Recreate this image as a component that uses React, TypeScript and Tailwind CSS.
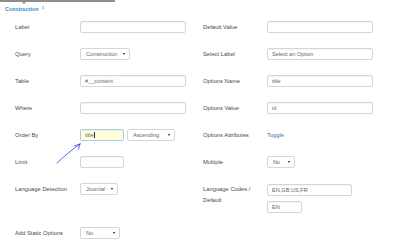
import React from "react";

const font = { fontFamily: '"Liberation Sans", Arial, sans-serif' };

function Field({ value, className = "", focused = false }: { value?: string; className?: string; focused?: boolean }) {
  return (
    <div
      className={`h-[12px] rounded-[2px] border px-[4px] flex items-center text-[5.6px] text-[#666] shadow-[inset_0_1px_1px_rgba(0,0,0,0.05)] ${
        focused ? "border-[#a6cfee] bg-[#ffffdc]" : "border-[#d6d6d6] bg-white"
      } ${className}`}
    >
      {value}
      {focused && <span className="w-[0.6px] h-[6px] bg-[#333] ml-[0.5px]" />}
    </div>
  );
}

function Select({ value, className = "" }: { value: string; className?: string }) {
  return (
    <div
      className={`h-[12px] rounded-[2px] border border-[#d6d6d6] bg-white pl-[5px] pr-[4px] flex items-center justify-between text-[5.6px] text-[#666] ${className}`}
    >
      <span>{value}</span>
      <span className="w-0 h-0 border-l-[1.5px] border-r-[1.5px] border-t-[2.5px] border-l-transparent border-r-transparent border-t-[#111]" />
    </div>
  );
}

function Label({ children, right = false }: { children: React.ReactNode; right?: boolean }) {
  return (
    <div className={`${right ? "w-[64px]" : "w-[80px] pl-[15px]"} shrink-0 text-[5.8px] leading-[12px] text-[#4a4a4a]`}>
      {children}
    </div>
  );
}

export default function App() {
  return (
    <div className="relative w-[406px] h-[250px] bg-white overflow-hidden" style={font}>
      {/* header */}
      <div className="h-[21px]">
        <div className="relative h-[2px] w-[115px] bg-[#8d8d8d]">
          <div className="absolute left-[22px] top-[2px] w-0 h-0 border-l-[2px] border-r-[2px] border-t-[2px] border-l-transparent border-r-transparent border-t-[#8d8d8d]" />
        </div>
        <div className="mt-[3px] ml-[5px] text-[5.4px] leading-[8px] font-bold text-[#2e8dd0]">
          Construction <sup className="text-[4px] ml-[2px]">1</sup>
        </div>
      </div>

      <div className="grid grid-cols-[203px_203px]">
        {/* row 1 */}
        <div className="h-[27px] flex items-start">
          <Label>Label</Label>
          <Field className="w-[106px]" />
        </div>
        <div className="h-[27px] flex items-start">
          <Label right>Default Value</Label>
          <Field className="w-[106px]" />
        </div>

        {/* row 2 */}
        <div className="h-[27px] flex items-start">
          <Label>Query</Label>
          <Select value="Construction" className="w-[50px]" />
        </div>
        <div className="h-[27px] flex items-start">
          <Label right>Select Label</Label>
          <Field value="Select an Option" className="w-[106px]" />
        </div>

        {/* row 3 */}
        <div className="h-[27px] flex items-start">
          <Label>Table</Label>
          <Field value="#__content" className="w-[106px]" />
        </div>
        <div className="h-[27px] flex items-start">
          <Label right>Options Name</Label>
          <Field value="title" className="w-[106px]" />
        </div>

        {/* row 4 */}
        <div className="h-[27px] flex items-start">
          <Label>Where</Label>
          <Field className="w-[106px]" />
        </div>
        <div className="h-[27px] flex items-start">
          <Label right>Options Value</Label>
          <Field value="id" className="w-[106px]" />
        </div>

        {/* row 5 */}
        <div className="h-[27px] flex items-start">
          <Label>Order By</Label>
          <Field value="title" focused className="w-[44px]" />
          <Select value="Ascending" className="w-[48px] ml-[3px]" />
        </div>
        <div className="h-[27px] flex items-start">
          <Label right>Options Attributes</Label>
          <span className="text-[5.8px] leading-[12px] text-[#2a78b8]">Toggle</span>
        </div>

        {/* row 6 */}
        <div className="h-[27px] flex items-start">
          <Label>Limit</Label>
          <Field className="w-[44px]" />
        </div>
        <div className="h-[27px] flex items-start">
          <Label right>Multiple</Label>
          <Select value="No" className="w-[28px]" />
        </div>

        {/* row 7 */}
        <div className="h-[44px] flex items-start">
          <Label>Language Detection</Label>
          <Select value="Joomla!" className="w-[38px]" />
        </div>
        <div className="h-[44px] flex items-start pt-[1px]">
          <div className="w-[64px] shrink-0 text-[5.8px] leading-[11px] text-[#4a4a4a]">
            Language Codes /<br />Default
          </div>
          <div className="flex flex-col gap-[5px]">
            <Field value="EN,GB,US,FR" className="w-[85px]" />
            <Field value="EN" className="w-[35px]" />
          </div>
        </div>

        {/* row 8 */}
        <div className="h-[27px] flex items-start">
          <Label>Add Static Options</Label>
          <Select value="No" className="w-[40px]" />
        </div>
        <div />
      </div>

      {/* annotation arrow */}
      <svg className="absolute left-[50px] top-[138px]" width="40" height="30" viewBox="0 0 40 30">
        <path d="M7 25 C 14 18, 22 12, 30 6" stroke="#3a3ae6" strokeWidth="0.8" fill="none" strokeLinecap="round" />
        <path d="M30 6 L 24 8 M30 6 L 28.5 11" stroke="#3a3ae6" strokeWidth="0.8" fill="none" strokeLinecap="round" />
      </svg>
    </div>
  );
}
